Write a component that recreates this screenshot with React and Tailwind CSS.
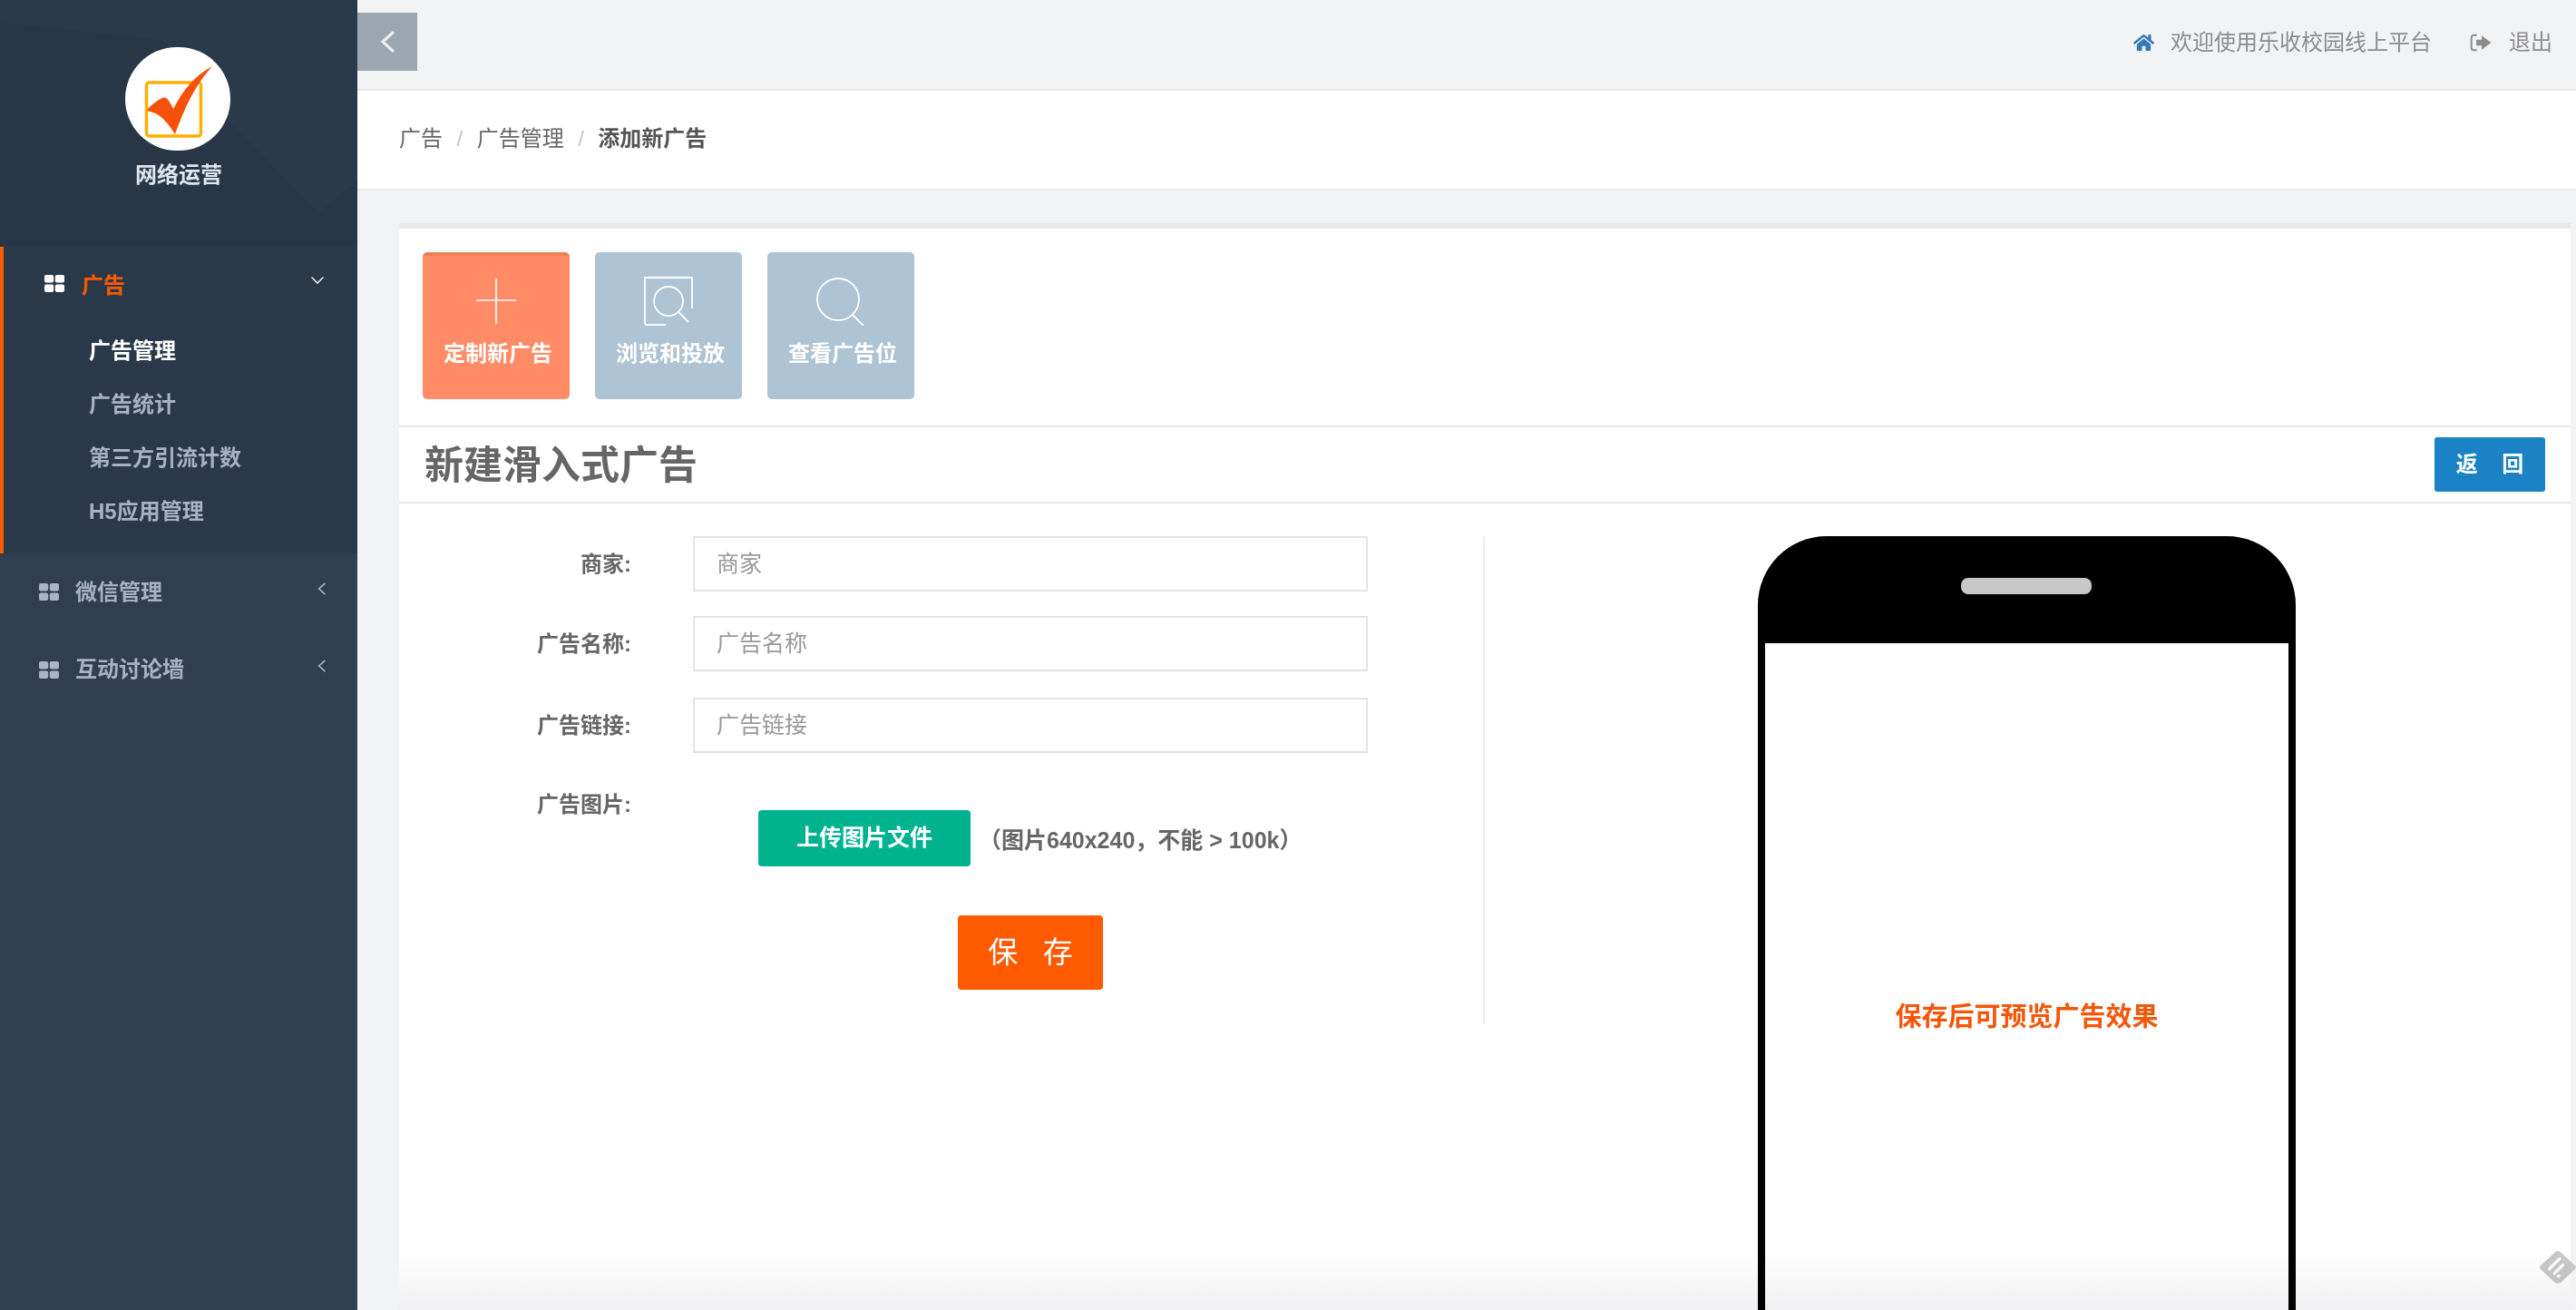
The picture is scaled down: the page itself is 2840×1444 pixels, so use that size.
import { FaHome } from 'react-icons/fa';

function GridIcon({ className }) {
  return (
    <svg viewBox="0 0 22 19" className={className} fill="currentColor">
      <rect x="0" y="0" width="10.2" height="8.6" rx="2" />
      <rect x="11.8" y="0" width="10.2" height="8.6" rx="2" />
      <rect x="0" y="10.4" width="10.2" height="8.6" rx="2" />
      <rect x="11.8" y="10.4" width="10.2" height="8.6" rx="2" />
    </svg>
  );
}

function LeftChevron({ className, width = 2 }) {
  return (
    <svg viewBox="0 0 8 12" className={className} fill="none" stroke="currentColor" strokeWidth={width} strokeLinecap="round">
      <path d="M7 1 L1.5 6 L7 11" />
    </svg>
  );
}

function Logo() {
  return (
    <div className="flex h-[114px] w-[116px] items-center justify-center rounded-full bg-white">
      <svg viewBox="0 0 116 114" className="h-[114px] w-[116px]">
        <rect x="23.5" y="39" width="60" height="59" rx="3" fill="none" stroke="#ffb000" strokeWidth="3.5" />
        <path d="M24 69 C30 63 36 58 41 56 C46 54 49 60 53 68 C64 47 76 32 96 21 C80 39 68 60 55 96 C48 85 40 75 31 72 C28 71 26 71 24 69 Z" fill="#f4510b" />
      </svg>
    </div>
  );
}

function SubItem({ children, active }) {
  return (
    <div className={`flex h-[59px] items-center pl-[94px] text-[24px] font-bold ${active ? 'text-white' : 'text-[#a7b2c4]'}`}>
      {children}
    </div>
  );
}

function MenuItem({ children }) {
  return (
    <div className="flex h-[85.5px] items-center pl-[43px] pr-[35px] text-[24px] font-bold text-[#a7b2c4]">
      <GridIcon className="mr-[18px] h-[19px] w-[22px] text-[#aab5c4]" />
      <span className="flex-1">{children}</span>
      <LeftChevron className="mb-[8px] h-[14px] w-[9px] text-[#aab5c4]" width={1.4} />
    </div>
  );
}

function Sidebar() {
  return (
    <aside className="flex w-[394px] shrink-0 flex-col bg-[#2f3e50]">
      <div className="relative h-[272px] overflow-hidden bg-[#273748]">
        <svg viewBox="0 0 394 272" className="absolute inset-0 h-full w-full">
          <path d="M180 45 L215 0 L394 0 L394 200 L350 235 L250 130 Z" fill="#293a4b" />
          <path d="M0 0 L215 0 L180 45 L0 25 Z" fill="#293949" />
        </svg>
        <div className="relative flex flex-col items-center pt-[52px]">
          <div className="pr-[2px]">
            <Logo />
          </div>
          <div className="mt-[12px] text-[24px] font-bold leading-[30px] text-[#dfe6ee]">网络运营</div>
        </div>
      </div>

      <div className="h-[338px] border-l-[4px] border-[#ff5a00] bg-[#2a394a]">
        <div className="flex h-[86px] items-center pl-[45px] pr-[37px]">
          <GridIcon className="mb-[5px] mr-[19px] h-[19px] w-[22px] text-white" />
          <span className="flex-1 text-[24px] font-bold text-[#ff5a00]">广告</span>
          <svg viewBox="0 0 14 8" className="mb-[12px] h-[8px] w-[14px] text-[#e8ecf0]" fill="none" stroke="currentColor" strokeWidth="1.6" strokeLinecap="round">
            <path d="M1 1 L7 7 L13 1" />
          </svg>
        </div>
        <div className="-mt-[1px]">
          <SubItem active>广告管理</SubItem>
          <SubItem>广告统计</SubItem>
          <SubItem>第三方引流计数</SubItem>
          <SubItem>H5应用管理</SubItem>
        </div>
      </div>

      <MenuItem>微信管理</MenuItem>
      <MenuItem>互动讨论墙</MenuItem>
    </aside>
  );
}

function TopBar() {
  return (
    <header className="flex h-[100px] shrink-0 items-start justify-between border-b-2 border-[#e7e8ea] bg-[#f2f3f5]">
      <button className="mt-[14px] flex h-[64px] w-[66px] items-center justify-center bg-[#9aa6b1] text-[#e9edf0]">
        <LeftChevron className="h-[26px] w-[16px]" width={1.6} />
      </button>
      <div className="flex h-[94px] items-center pr-[26px] text-[24px] text-[#8c8c8c]">
        <FaHome className="mr-[18px] h-[22px] w-[23px] text-[#337ab7]" />
        <span>欢迎使用乐收校园线上平台</span>
        <svg viewBox="0 0 22 18" className="ml-[42px] mr-[19px] h-[20px] w-[24px]" fill="none">
          <path d="M7 1.5 H4 A2.5 2.5 0 0 0 1.5 4 V14 A2.5 2.5 0 0 0 4 16.5 H7" stroke="currentColor" strokeWidth="1.8" />
          <path d="M6.5 6 H12 V2 L21.5 9 L12 16 V12 H6.5 Z" fill="currentColor" />
        </svg>
        <span>退出</span>
      </div>
    </header>
  );
}

function Breadcrumb() {
  return (
    <div className="flex h-[110px] shrink-0 items-center border-b-2 border-[#ebeced] bg-white pb-[2px] pl-[46px] text-[24px] text-[#666]">
      <span>广告</span>
      <span className="mx-[15.5px] text-[#c4c4c4]">/</span>
      <span>广告管理</span>
      <span className="mx-[15.5px] text-[#c4c4c4]">/</span>
      <span className="font-bold text-[#555]">添加新广告</span>
    </div>
  );
}

function Tile({ icon, label, active }) {
  return (
    <div className={`flex h-[162px] w-[162px] flex-col items-center rounded-[5px] ${active ? 'border-t-[4px] border-[#ee8158] bg-[#ff8c66] pt-[19px]' : 'bg-[#aec3d3] pt-[23px]'}`}>
      <div className="flex h-[62px] w-full items-center justify-center">{icon}</div>
      <div className="mt-[10px] pl-[4px] text-[24px] font-bold leading-[34px] text-white">{label}</div>
    </div>
  );
}

function FormRow({ label, className }) {
  return (
    <div className={`flex items-center ${className}`}>
      <label className="w-[256px] text-right text-[24px] font-bold text-[#666]">{label}:</label>
      <input
        placeholder={label}
        className="ml-[68px] h-[61px] w-[744px] border-2 border-[#e5e5e5] bg-white pl-[24px] text-[25px] outline-none placeholder:text-[#999]"
      />
    </div>
  );
}

function AdForm() {
  return (
    <div className="h-[538px] w-[1197px] shrink-0 border-r-2 border-[#eeeeee]">
      <FormRow label="商家" />
      <FormRow label="广告名称" className="mt-[27px]" />
      <FormRow label="广告链接" className="mt-[29px]" />
      <div className="mt-[39px] flex items-start">
        <label className="w-[256px] text-right text-[24px] font-bold leading-[36px] text-[#666]">广告图片:</label>
        <button className="ml-[140px] mt-[24px] h-[62px] w-[234px] rounded-[4px] bg-[#00b38f] text-[25px] font-bold text-white">上传图片文件</button>
        <span className="ml-[9px] mt-[38px] whitespace-nowrap text-[25px] font-bold leading-[38px] text-[#666]">（图片640x240，不能 &gt; 100k）</span>
      </div>
      <div className="ml-[324px] mt-[54px] flex w-[744px] justify-center">
        <button className="h-[82px] w-[160px] rounded-[4px] bg-[#ff5a00] text-[33px] text-white">保&nbsp;&nbsp;&nbsp;存</button>
      </div>
    </div>
  );
}

function Phone() {
  return (
    <div className="relative z-0 flex flex-1 justify-center pr-[2px]">
      <div className="h-[960px] w-[593px] shrink-0 rounded-t-[76px] bg-black px-[8px] pt-[118px]">
        <div className="relative h-[826px] bg-white">
          <div className="absolute left-[216px] top-[-72px] h-[18px] w-[144px] rounded-[8px] bg-[#c8c8c8]" />
          <div className="flex h-full items-center justify-center text-[29px] font-bold text-[#f4560a]">保存后可预览广告效果</div>
        </div>
      </div>
    </div>
  );
}

export default function App() {
  return (
    <div className="relative flex h-screen w-screen overflow-hidden bg-[#f2f3f5] font-['Liberation_Sans','Noto_Sans_CJK_SC',sans-serif]">
      <Sidebar />
      <main className="flex min-w-0 flex-1 flex-col">
        <TopBar />
        <Breadcrumb />
        <section className="relative ml-[46px] mr-[6px] mt-[36px] min-h-0 flex-1 overflow-hidden border-t-[6px] border-[#e6e9ea] bg-white">
          <div className="flex gap-[28px] border-b-2 border-[#e7e9ea] pb-[29px] pl-[26px] pt-[26px]">
            <Tile
              active
              label="定制新广告"
              icon={
                <svg viewBox="0 0 46 52" className="h-[52px] w-[46px] text-white" fill="none" stroke="currentColor" strokeWidth="1.6">
                  <path d="M23 1 V51 M1 25 H45" />
                </svg>
              }
            />
            <Tile
              label="浏览和投放"
              icon={
                <svg viewBox="0 0 56 54" className="ml-[2px] h-[54px] w-[56px] text-white" fill="none" stroke="currentColor" strokeWidth="1.8">
                  <path d="M24 53 H3 Q1 53 1 51 V1 H53 V35" />
                  <circle cx="27" cy="27" r="16" />
                  <path d="M38 39 L49 50" />
                </svg>
              }
            />
            <Tile
              label="查看广告位"
              icon={
                <svg viewBox="0 0 56 54" className="h-[54px] w-[56px] text-white" fill="none" stroke="currentColor" strokeWidth="1.8">
                  <circle cx="25" cy="25" r="23" />
                  <path d="M41 42 L53 54" />
                </svg>
              }
            />
          </div>
          <div className="flex h-[84px] items-center justify-between border-b-2 border-[#e7e9ea] pl-[28px] pr-[28px]">
            <h1 className="pt-[2px] text-[43px] font-bold text-[#666]">新建滑入式广告</h1>
            <button className="h-[60px] w-[122px] rounded-[3px] bg-[#1b82c5] text-[24px] font-bold text-white">返&nbsp;&nbsp;&nbsp;&nbsp;回</button>
          </div>
          <div className="flex pt-[36px]">
            <AdForm />
            <Phone />
          </div>
          <div className="pointer-events-none absolute inset-x-0 bottom-0 z-10 h-[64px] bg-gradient-to-b from-white to-[#f0f0f2] mix-blend-multiply" />
        </section>
      </main>

      <svg viewBox="0 0 44 40" className="absolute bottom-[28px] right-[-2px] h-[38px] w-[44px]">
        <path d="M19 2 Q22 0 25 2 L42 18 Q44 20 42 22 L26 37 Q22 40 18 37 L2 22 Q0 20 2 18 Z" fill="#c9c9c9" />
        <path d="M24 10 L12 22 M28 17 L18 27" stroke="#fff" strokeWidth="3.5" strokeLinecap="round" />
        <circle cx="23" cy="30" r="2.2" fill="#fff" />
      </svg>
    </div>
  );
}
